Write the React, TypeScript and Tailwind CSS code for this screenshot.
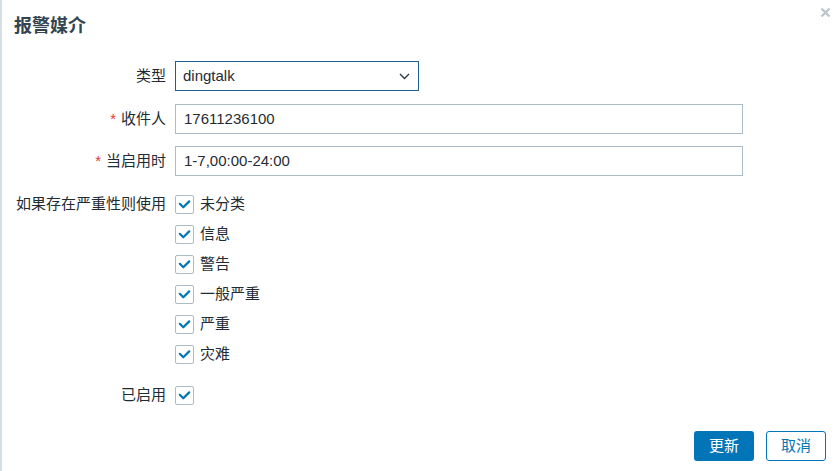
import React from 'react';

const font = { fontFamily: '"Liberation Sans", "Noto Sans CJK SC", sans-serif' };

const severities = ['未分类', '信息', '警告', '一般严重', '严重', '灾难'];

const CheckBox: React.FC = () => (
  <span className="flex h-[19px] w-[19px] items-center justify-center rounded-[2px] border border-[#acbbc4] bg-white">
    <svg width="13" height="13" viewBox="0 0 13 13" fill="none">
      <polyline points="1.8,5.8 5.3,9.3 11.2,3.4" stroke="#0275b8" strokeWidth="2.2" strokeLinecap="round" strokeLinejoin="round" />
    </svg>
  </span>
);

const Label: React.FC<{ text: string; required?: boolean }> = ({ text, required }) => (
  <div className="w-[164px] shrink-0 text-right text-[15px] text-[#1f2c33]">
    {required && <span className="mr-[5px] text-[#e33734]">*</span>}
    {text}
  </div>
);

export default function App() {
  return (
    <div style={font} className="relative h-[471px] w-[837px] overflow-hidden border-l-2 border-[#d5dee5] bg-white">
      <div className="pl-[12px] pt-[12px] text-[18px] font-bold leading-[28px] text-[#34454f]">报警媒介</div>
      <button className="absolute right-[6px] top-[7px]">
        <svg width="11" height="11" viewBox="0 0 11 11" fill="none">
          <path d="M1.5 1.5 L9.5 9.5 M9.5 1.5 L1.5 9.5" stroke="#bcc6cd" strokeWidth="2.4" />
        </svg>
      </button>

      <div className="mt-[21px] flex h-[30px] items-center">
        <Label text="类型" />
        <div className="ml-[9px] flex h-[30px] w-[244px] items-center justify-between border border-[#1f5d94] pl-[7px] pr-[8px] text-[15px] text-[#1f2c33]">
          <span>dingtalk</span>
          <svg width="11" height="7" viewBox="0 0 11 7" fill="none">
            <polyline points="1,1 5.5,5.5 10,1" stroke="#2b3a44" strokeWidth="1.4" />
          </svg>
        </div>
      </div>

      <div className="mt-[13px] flex h-[30px] items-center">
        <Label text="收件人" required />
        <div className="ml-[9px] flex h-[30px] w-[568px] items-center border border-[#acbbc4] pl-[8px] text-[15px] text-[#1f2c33]">
          17611236100
        </div>
      </div>

      <div className="mt-[12px] flex h-[30px] items-center">
        <Label text="当启用时" required />
        <div className="ml-[9px] flex h-[30px] w-[568px] items-center border border-[#acbbc4] pl-[8px] text-[15px] text-[#1f2c33]">
          1-7,00:00-24:00
        </div>
      </div>

      <div className="mt-[13px] flex">
        <div className="flex h-[30px] items-center">
          <Label text="如果存在严重性则使用" />
        </div>
        <div className="ml-[9px] flex flex-col">
          {severities.map((s) => (
            <div key={s} className="flex h-[30px] items-center gap-[6px] text-[15px] text-[#1f2c33]">
              <CheckBox />
              <span>{s}</span>
            </div>
          ))}
        </div>
      </div>

      <div className="mt-[11px] flex h-[30px] items-center">
        <Label text="已启用" />
        <div className="ml-[9px]">
          <CheckBox />
        </div>
      </div>

      <div className="mt-[21px] flex justify-end gap-[12px] pr-[11px]">
        <button className="h-[30px] w-[60px] rounded-[3px] bg-[#0275b8] text-[15px] text-white">更新</button>
        <button className="h-[30px] w-[60px] rounded-[3px] border border-[#0275b8] bg-white text-[15px] text-[#0275b8]">取消</button>
      </div>
    </div>
  );
}
